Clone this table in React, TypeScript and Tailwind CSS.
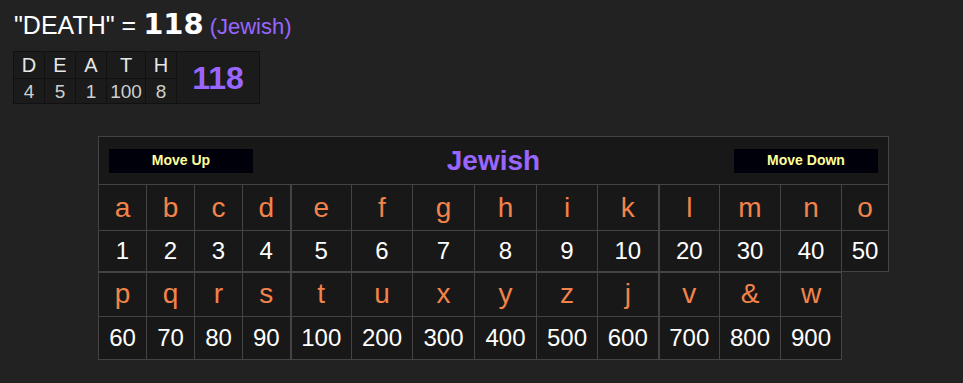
import React from 'react';

const COLS = [48, 48, 48, 48, 61, 61, 62, 62, 61, 61, 61, 61, 61, 47];

const ROW_A = [
  ['a', 1], ['b', 2], ['c', 3], ['d', 4], ['e', 5], ['f', 6], ['g', 7],
  ['h', 8], ['i', 9], ['k', 10], ['l', 20], ['m', 30], ['n', 40], ['o', 50],
] as const;

const ROW_B = [
  ['p', 60], ['q', 70], ['r', 80], ['s', 90], ['t', 100], ['u', 200], ['x', 300],
  ['y', 400], ['z', 500], ['j', 600], ['v', 700], ['&', 800], ['w', 900],
] as const;

const WORD = [
  ['D', 4], ['E', 5], ['A', 1], ['T', 100], ['H', 8],
] as const;

const cellBorder = (i: number) =>
  i === 4 || i === 10 ? 'border border-[#444] border-l-2' : 'border border-[#444]';

const App: React.FC = () => {
  return (
    <div className="min-h-[383px] w-full bg-[#222222] font-['Liberation_Sans',Arial,sans-serif] text-white">
      {/* Title line */}
      <div className="flex items-baseline px-[14px] pt-[9px] h-[51px]">
        <span className="text-[25px] leading-[30px]">"DEATH" =&nbsp;</span>
        <span className="font-['DejaVu_Sans',sans-serif] font-bold text-[29px] leading-[30px]">118</span>
        <span className="ml-[6px] text-[22px] leading-[30px] text-[#9966ff]">(Jewish)</span>
      </div>

      {/* Word breakdown */}
      <div className="ml-[13px]">
        <table className="border-separate border-spacing-[1px] bg-[#111111]">
          <tbody>
            <tr>
              {WORD.map(([l], i) => (
                <td
                  key={i}
                  className={`h-[26px] bg-[#1b1b1b] text-center text-[20px] leading-none text-[#e6e6e6] ${l === 'T' ? 'w-[38px]' : 'w-[30px]'}`}
                >
                  {l}
                </td>
              ))}
              <td
                rowSpan={2}
                className="w-[82px] bg-[#1b1b1b] text-center text-[32px] font-bold leading-none text-[#9966ff]"
              >
                118
              </td>
            </tr>
            <tr>
              {WORD.map(([, n], i) => (
                <td key={i} className="h-[24px] bg-[#1b1b1b] text-center text-[19px] leading-none text-[#cfcfcf]">
                  {n}
                </td>
              ))}
            </tr>
          </tbody>
        </table>
      </div>

      {/* Cipher chart */}
      <div className="ml-[98px] mt-[32px]">
        <table className="table-fixed border-collapse">
          <colgroup>
            {COLS.map((w, i) => (
              <col key={i} style={{ width: w }} />
            ))}
          </colgroup>
          <tbody>
            <tr>
              <td colSpan={14} className="h-[48px] border border-[#444] bg-[#181818] px-[10px]">
                <div className="flex items-center justify-between">
                  <button className="h-[24px] w-[144px] bg-[#00000a] text-[14px] font-bold text-[#ffff99]">
                    Move Up
                  </button>
                  <span className="text-[28px] font-bold leading-none text-[#9966ff]">Jewish</span>
                  <button className="h-[24px] w-[144px] bg-[#00000a] text-[14px] font-bold text-[#ffff99]">
                    Move Down
                  </button>
                </div>
              </td>
            </tr>
            <tr>
              {ROW_A.map(([l], i) => (
                <td key={i} className={`h-[46px] bg-[#181818] text-center text-[28px] leading-none text-[#f2834a] ${cellBorder(i)}`}>
                  {l}
                </td>
              ))}
            </tr>
            <tr>
              {ROW_A.map(([, n], i) => (
                <td key={i} className={`h-[41px] bg-[#181818] text-center text-[24px] leading-none text-white ${cellBorder(i)}`}>
                  {n}
                </td>
              ))}
            </tr>
            <tr>
              {ROW_B.map(([l], i) => (
                <td key={i} className={`h-[45px] border-t-2 bg-[#181818] text-center text-[28px] leading-none text-[#f2834a] ${cellBorder(i)}`}>
                  {l}
                </td>
              ))}
            </tr>
            <tr>
              {ROW_B.map(([, n], i) => (
                <td key={i} className={`h-[43px] bg-[#181818] text-center text-[24px] leading-none text-white ${cellBorder(i)}`}>
                  {n}
                </td>
              ))}
            </tr>
          </tbody>
        </table>
      </div>
    </div>
  );
};

export default App;
